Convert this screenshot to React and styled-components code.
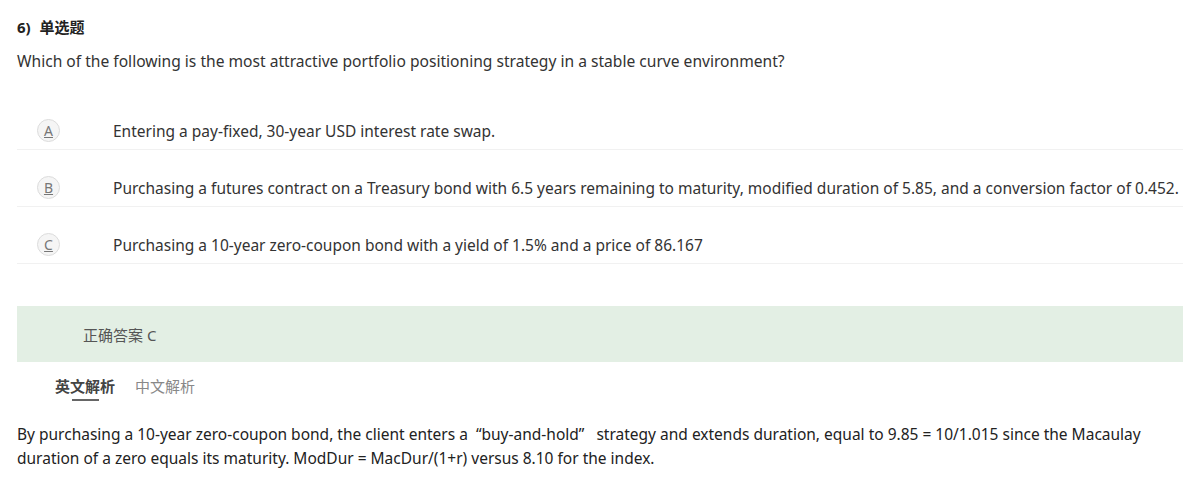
import React from 'react'
import styled, { createGlobalStyle } from 'styled-components'

const Global = createGlobalStyle`
  body {
    margin: 0;
    background: #fff;
    font-family: "Noto Sans", "Noto Sans CJK SC", sans-serif;
    color: #333;
  }
`

const Page = styled.div`
  padding: 16px 0 0 17px;
  width: 1166px;
`

const Title = styled.div`
  font-size: 15px;
  font-weight: 700;
  line-height: 22px;
  color: #222;
  word-spacing: 5px;
`

const Stem = styled.div`
  margin-top: 11px;
  font-size: 15.6px;
  line-height: 24px;
`

const Options = styled.div`
  margin-top: 20px;
`

const Option = styled.div`
  display: flex;
  align-items: center;
  padding: 26px 0 7px;
  border-bottom: 1px solid #f1f1f1;
  line-height: 22px;
`

const Badge = styled.span`
  width: 23px;
  height: 23px;
  margin-left: 20px;
  margin-right: 53px;
  flex: none;
  box-sizing: border-box;
  border: 1px solid #dcdcdc;
  border-radius: 50%;
  background: #f5f5f5;
  display: flex;
  align-items: center;
  justify-content: center;
  font-size: 14px;
  color: #777;
  text-decoration: underline;
`

const OptionText = styled.span`
  font-size: 15.5px;
  color: #333;
  white-space: nowrap;
`

const Answer = styled.div`
  margin-top: 42px;
  height: 56px;
  background: #e3efe4;
  display: flex;
  align-items: center;
  padding-left: 66px;
  font-size: 15px;
  color: #555;
`

const Tabs = styled.div`
  display: flex;
  gap: 20px;
  padding-left: 38px;
  margin-top: 13px;
`

const Tab = styled.div`
  position: relative;
  font-size: 15px;
  line-height: 22px;
  padding-bottom: 4px;
  color: ${p => (p.$active ? '#444' : '#888')};
  font-weight: ${p => (p.$active ? 700 : 400)};
  &::after {
    content: '';
    display: ${p => (p.$active ? 'block' : 'none')};
    position: absolute;
    left: 17px;
    width: 27px;
    bottom: 0;
    height: 2px;
    background: #666;
  }
`

const Analysis = styled.p`
  margin: 21px 0 0;
  font-size: 15.5px;
  line-height: 24px;
  color: #222;
  width: 1150px;
`

const options = [
  ['A', 'Entering a pay-fixed, 30-year USD interest rate swap.'],
  ['B', 'Purchasing a futures contract on a Treasury bond with 6.5 years remaining to maturity, modified duration of 5.85, and a conversion factor of 0.452.'],
  ['C', 'Purchasing a 10-year zero-coupon bond with a yield of 1.5% and a price of 86.167'],
]

export default function App() {
  return (
    <Page>
      <Global />
      <Title>6) 单选题</Title>
      <Stem>Which of the following is the most attractive portfolio positioning strategy in a stable curve environment?</Stem>
      <Options>
        {options.map(([k, t]) => (
          <Option key={k}>
            <Badge>{k}</Badge>
            <OptionText>{t}</OptionText>
          </Option>
        ))}
      </Options>
      <Answer>正确答案 C</Answer>
      <Tabs>
        <Tab $active>英文解析</Tab>
        <Tab>中文解析</Tab>
      </Tabs>
      <Analysis>
        By purchasing a 10-year zero-coupon bond, the client enters a &nbsp;“buy-and-hold”&nbsp;&nbsp; strategy and extends duration, equal to 9.85 = 10/1.015 since the Macaulay duration of a zero equals its maturity. ModDur = MacDur/(1+r) versus 8.10 for the index.
      </Analysis>
    </Page>
  )
}
